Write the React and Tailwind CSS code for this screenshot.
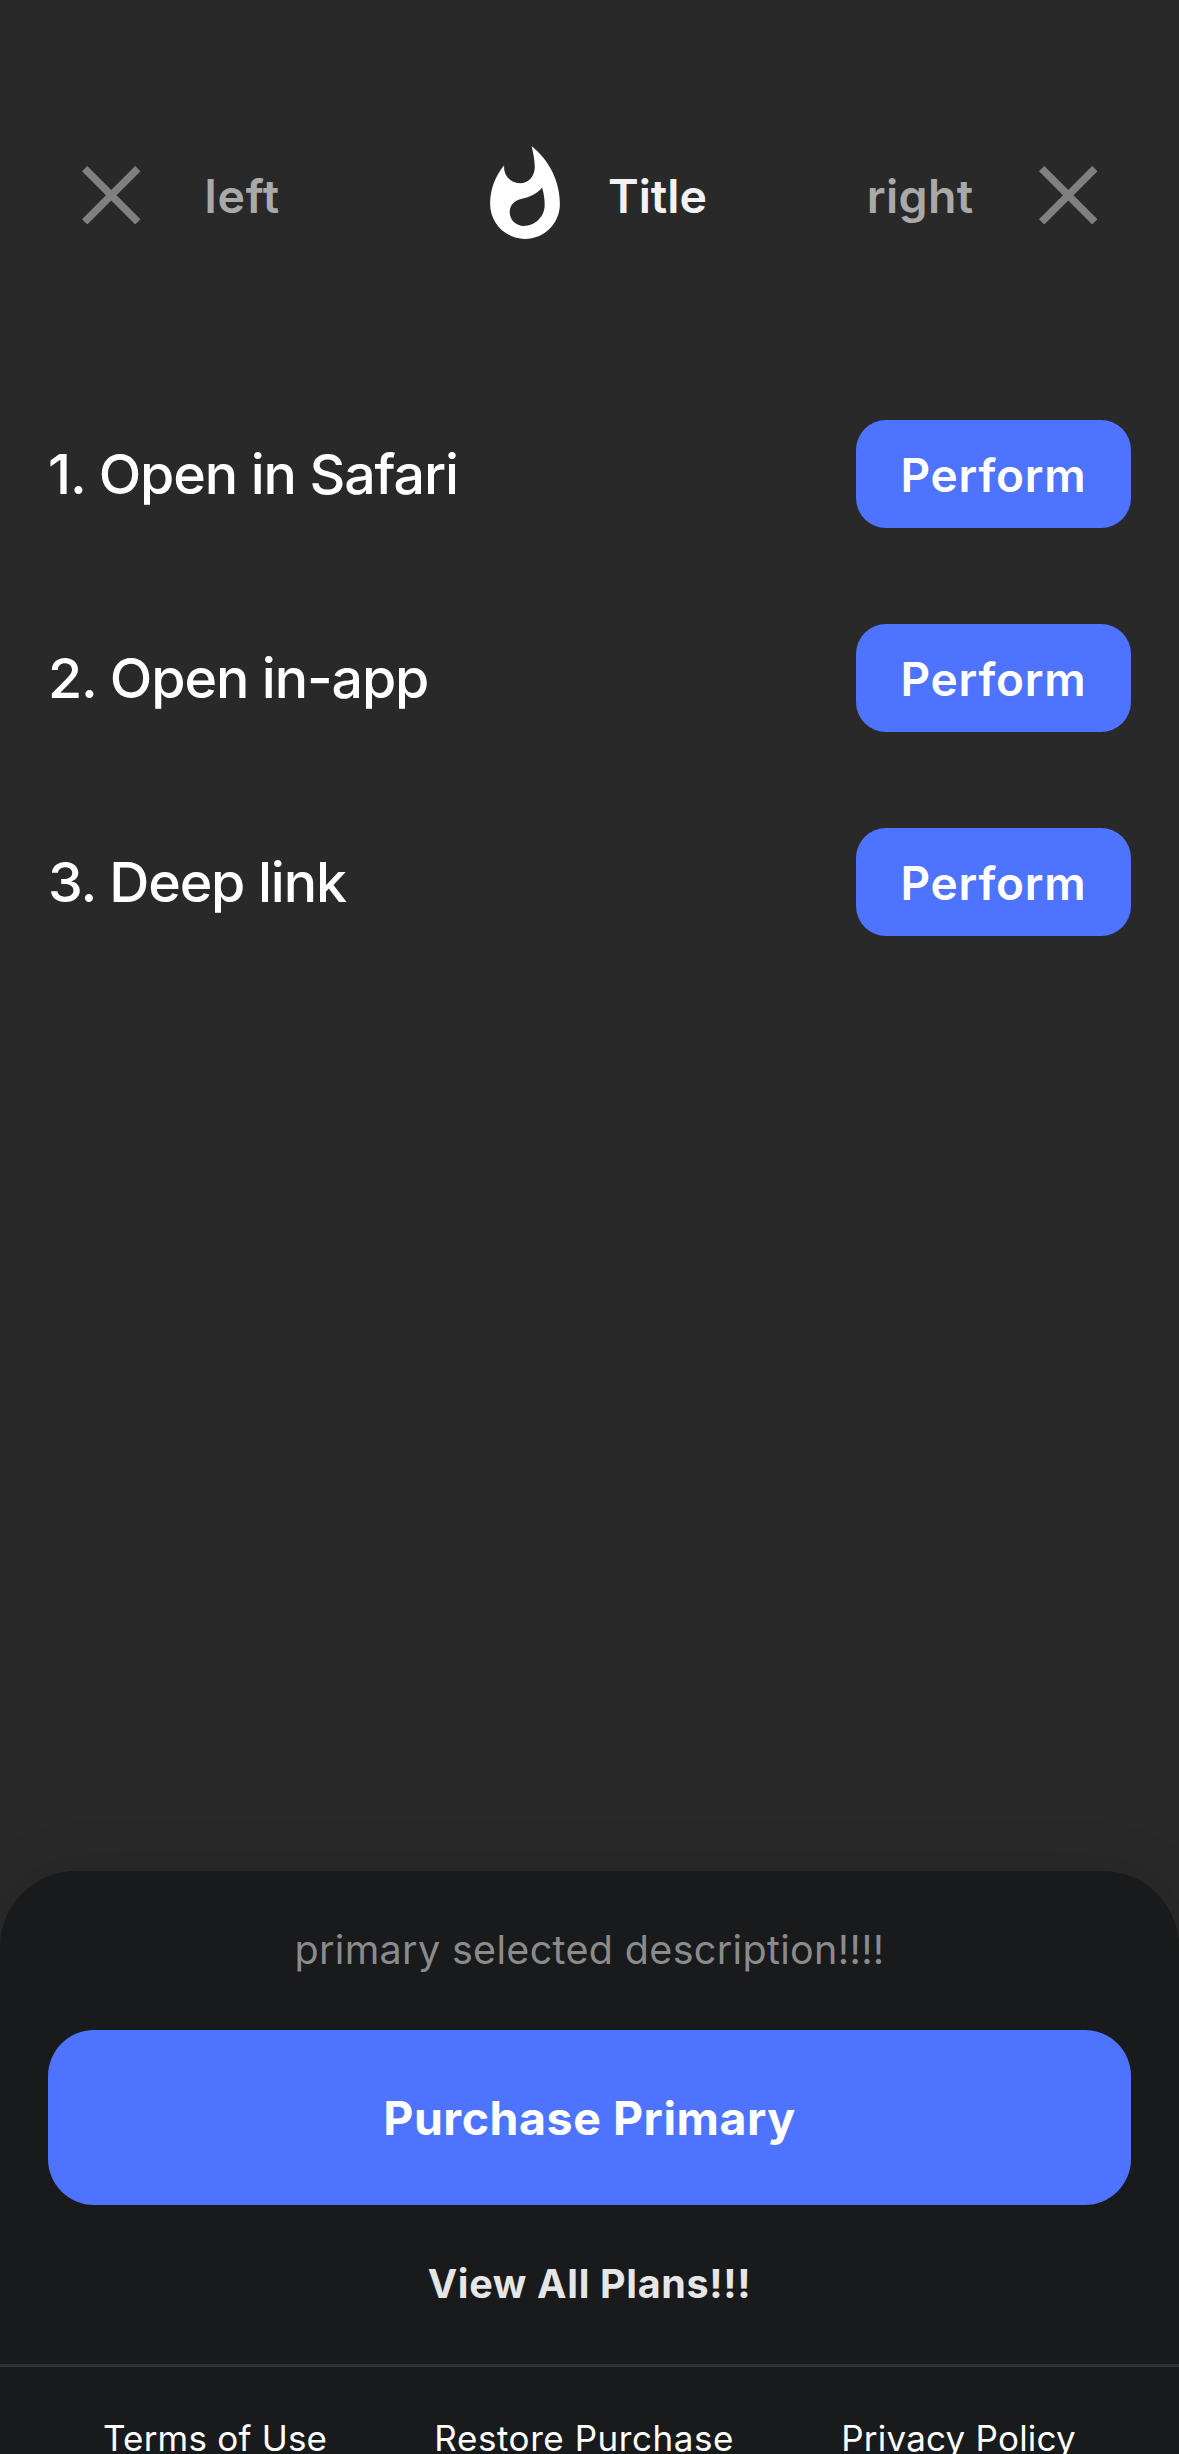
const Close = () => (
  <svg className="h-[58.5px] w-[58.5px] shrink-0" viewBox="0 0 58.5 58.5" fill="none" stroke="#808080" strokeWidth="7.5">
    <path d="M2.65 2.65 55.85 55.85M55.85 2.65 2.65 55.85" />
  </svg>
);

const Flame = () => (
  <svg className="-mt-[5px] h-[93px] w-[70px] shrink-0" viewBox="4 0.67 16 21.33" fill="white">
    <path d="M13.5.67s.74 2.65.74 4.8c0 2.06-1.35 3.73-3.41 3.73-2.07 0-3.63-1.67-3.63-3.73l.03-.36C5.21 7.51 4 10.62 4 14c0 4.42 3.58 8 8 8s8-3.58 8-8C20 8.61 17.41 3.8 13.5.67zM11.71 19c-1.78 0-3.22-1.4-3.22-3.14 0-1.62 1.05-2.76 2.81-3.12 1.77-.36 3.6-1.21 4.62-2.58.39 1.29.59 2.65.59 4.04 0 2.65-2.15 4.8-4.8 4.8z" />
  </svg>
);

const Row = ({ label }) => (
  <div className="flex h-[204px] items-center justify-between px-[48px]">
    <span className="text-[55.5px] leading-[68px] font-medium tracking-[-1.13px] text-white">{label}</span>
    <button className="h-[108px] w-[275px] rounded-[30px] bg-[#4e73ff] pt-[2px] text-[46px] leading-[56px] font-semibold tracking-[0.81px] text-white">
      Perform
    </button>
  </div>
);

export default function App() {
  return (
    <div className="flex h-[2454px] w-[1179px] flex-col overflow-hidden bg-[#292929] font-['Inter',sans-serif]">
      <header className="flex h-[372px] shrink-0 items-start px-[82px] pt-[144px] text-[46.5px] leading-[58px] font-semibold">
        <div className="flex h-[102px] w-[408px] items-center gap-[64px] text-[#a9a9a9]">
          <Close />
          <span className="pt-[2px] tracking-[0.77px]">left</span>
        </div>
        <div className="flex h-[102px] items-center gap-[48px] text-[#f2f2f2]">
          <Flame />
          <span className="pt-[2px]">Title</span>
        </div>
        <div className="ml-auto flex h-[102px] items-center gap-[65px] text-[#a9a9a9]">
          <span className="pt-[2px] tracking-[0.34px]">right</span>
          <Close />
        </div>
      </header>
      <main className="grow">
        <Row label="1. Open in Safari" />
        <Row label="2. Open in-app" />
        <Row label="3. Deep link" />
      </main>
      <footer className="flex h-[583px] shrink-0 flex-col rounded-t-[76px] bg-[#191a1b] shadow-[0_0_60px_rgba(0,0,0,0.1)]">
        <p className="pt-[55px] text-center text-[39.5px] leading-[48px] tracking-[0.33px] text-[#8b8b8b]">
          primary selected description!!!!
        </p>
        <button className="mx-[48px] mt-[56px] h-[175px] shrink-0 rounded-[46px] bg-[#4e73ff] pt-[1px] text-[46.5px] leading-[56px] font-bold tracking-[0.53px] text-white">
          Purchase Primary
        </button>
        <button className="mt-[55px] h-[48px] text-[39.5px] leading-[48px] font-bold tracking-[0.67px] text-[#e6e6e6]">
          View All Plans!!!
        </button>
        <div className="mt-[56px] flex h-[90px] shrink-0 justify-between border-t-3 border-[#303132] px-[103px] pt-[49px] text-[35px] leading-[44px] text-white">
          <span className="tracking-[0.21px]">Terms of Use</span>
          <span className="tracking-[0.56px]">Restore Purchase</span>
          <span className="tracking-[0.23px]">Privacy Policy</span>
        </div>
      </footer>
    </div>
  );
}
